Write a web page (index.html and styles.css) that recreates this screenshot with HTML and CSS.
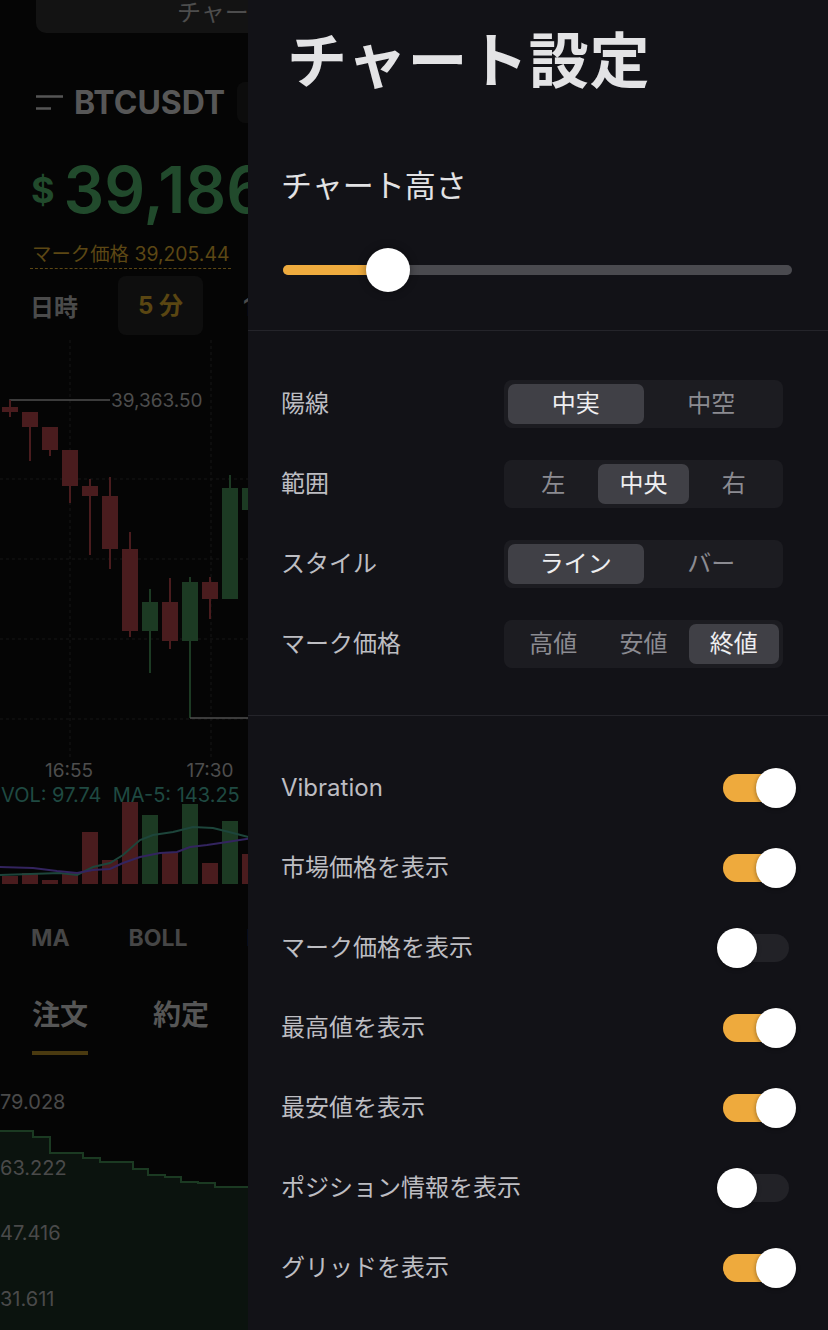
FILE: index.html
```html
<!DOCTYPE html>
<html lang="ja">

<head>
    <meta charset="UTF-8">
    <meta name="viewport" content="width=device-width, initial-scale=1.0">
    <title>チャート設定</title>
    <link rel="stylesheet" href="styles.css">
</head>

<body>
    <div class="screen">
        <!-- market page, dimmed behind the drawer -->
        <div class="market">
            <div class="view-tabs">
                <span class="view-tab">チャート</span>
                <span class="view-tab">詳細</span>
            </div>

            <div class="symbol-row">
                <svg class="menu-icon" width="28" height="15" viewBox="0 0 28 15">
                    <path d="M0 1.5h27M0 13.5h15" stroke="#555" stroke-width="2.6" fill="none" />
                </svg>
                <span class="symbol">BTCUSDT</span>
                <span class="symbol-badge"></span>
            </div>

            <div class="price-row">
                <span class="currency">$</span>
                <span class="price">39,186</span>
            </div>

            <div class="mark-price">マーク価格 39,205.44</div>

            <div class="intervals">
                <span class="interval">日時</span>
                <span class="interval active">5 分</span>
                <span class="interval">15分</span>
            </div>

            <svg class="kline" width="828" height="560" viewBox="0 0 828 560">
                <g stroke="#161616" stroke-dasharray="3 3">
                    <path d="M70 0V420M211 0V420" />
                    <path d="M0 139H828M0 219H828M0 299H828M0 379H828" />
                </g>
                <path d="M10 67V60H110" stroke="#4f4f4f" stroke-width="1.5" fill="none" />
                <text class="axis-label" x="111" y="67">39,363.50</text>

                <g stroke="#4a1c1e" stroke-width="2" fill="#4a1c1e">
                    <path d="M10 60V77M30 72V121M50 87V116M70 110V163M90 139V215M110 137V229M130 192V297M170 238V309M210 237V279" />
                    <rect x="2" y="67" width="16" height="5" stroke="none" />
                    <rect x="22" y="72" width="16" height="15" stroke="none" />
                    <rect x="42" y="87" width="16" height="23" stroke="none" />
                    <rect x="62" y="110" width="16" height="36" stroke="none" />
                    <rect x="82" y="146" width="16" height="10" stroke="none" />
                    <rect x="102" y="156" width="16" height="53" stroke="none" />
                    <rect x="122" y="209" width="16" height="82" stroke="none" />
                    <rect x="162" y="262" width="16" height="39" stroke="none" />
                    <rect x="202" y="242" width="16" height="17" stroke="none" />
                </g>
                <g stroke="#1c3a23" stroke-width="2" fill="#1c3a23">
                    <path d="M150 249V333M190 237V378M230 135V148M250 140V175" />
                    <rect x="142" y="262" width="16" height="29" stroke="none" />
                    <rect x="182" y="242" width="16" height="59" stroke="none" />
                    <rect x="222" y="148" width="16" height="111" stroke="none" />
                    <rect x="242" y="148" width="16" height="22" stroke="none" />
                </g>
                <path d="M190 378H300" stroke="#4f4f4f" stroke-width="1.5" fill="none" />

                <text class="axis-label" x="69" y="437" text-anchor="middle">16:55</text>
                <text class="axis-label" x="210" y="437" text-anchor="middle">17:30</text>
                <text class="vol-label" x="1" y="462">VOL: 97.74&#160;&#160;MA-5: 143.25</text>

                <g fill="#4a1c1e">
                    <rect x="2" y="536" width="16" height="8" />
                    <rect x="22" y="533" width="16" height="11" />
                    <rect x="42" y="540" width="16" height="4" />
                    <rect x="62" y="533" width="16" height="11" />
                    <rect x="82" y="492" width="16" height="52" />
                    <rect x="102" y="520" width="16" height="24" />
                    <rect x="122" y="462" width="16" height="82" />
                    <rect x="162" y="513" width="16" height="31" />
                    <rect x="202" y="523" width="16" height="21" />
                    <rect x="242" y="514" width="16" height="30" />
                </g>
                <g fill="#1c3a23">
                    <rect x="142" y="475" width="16" height="69" />
                    <rect x="182" y="464" width="16" height="80" />
                    <rect x="222" y="481" width="16" height="63" />
                </g>
                <polyline points="0,535 60,533 77,535 93,527 110,523 123,515 140,500 153,495 173,492 193,487 213,488 233,493 260,500" stroke="#1d453b" stroke-width="2" fill="none" />
                <polyline points="0,527 33,528 57,531 77,533 93,530 110,529 123,523 140,517 160,513 177,512 190,507 207,505 227,502 260,497" stroke="#33245f" stroke-width="2" fill="none" />
            </svg>

            <div class="indicators">
                <span>MA</span>
                <span>BOLL</span>
                <span>E</span>
            </div>

            <div class="order-tabs">
                <span class="order-tab active">注文</span>
                <span class="order-tab">約定</span>
            </div>

            <svg class="depth" width="828" height="260" viewBox="0 0 828 260">
                <path d="M0 61H33V67H50V83H83V88H100V92H133V99H148V105H165V107H181V112H198V113H215V117H300V260H0Z" fill="#0b130e" />
                <path d="M0 61H33V67H50V83H83V88H100V92H133V99H148V105H165V107H181V112H198V113H215V117H300" stroke="#1b3a22" stroke-width="2" fill="none" />
                <text class="depth-label" x="0" y="39">79.028</text>
                <text class="depth-label" x="0" y="105">63.222</text>
                <text class="depth-label" x="0" y="170">47.416</text>
                <text class="depth-label" x="0" y="236">31.611</text>
            </svg>
        </div>

        <!-- settings drawer -->
        <aside class="drawer">
            <h1 class="drawer-title">チャート設定</h1>

            <section class="height-setting">
                <div class="setting-title">チャート高さ</div>
                <div class="slider">
                    <div class="slider-track">
                        <div class="slider-fill" style="width: 20.6%"></div>
                    </div>
                    <div class="slider-thumb" style="left: 20.6%"></div>
                </div>
            </section>

            <section class="setting-group">
                <div class="setting-row">
                    <span class="setting-label">陽線</span>
                    <div class="segmented">
                        <span class="segment active">中実</span>
                        <span class="segment">中空</span>
                    </div>
                </div>
                <div class="setting-row">
                    <span class="setting-label">範囲</span>
                    <div class="segmented">
                        <span class="segment">左</span>
                        <span class="segment active">中央</span>
                        <span class="segment">右</span>
                    </div>
                </div>
                <div class="setting-row">
                    <span class="setting-label">スタイル</span>
                    <div class="segmented">
                        <span class="segment active">ライン</span>
                        <span class="segment">バー</span>
                    </div>
                </div>
                <div class="setting-row">
                    <span class="setting-label">マーク価格</span>
                    <div class="segmented">
                        <span class="segment">高値</span>
                        <span class="segment">安値</span>
                        <span class="segment active">終値</span>
                    </div>
                </div>
            </section>

            <section class="setting-group toggles">
                <div class="setting-row">
                    <span class="setting-label">Vibration</span>
                    <span class="switch on"></span>
                </div>
                <div class="setting-row">
                    <span class="setting-label">市場価格を表示</span>
                    <span class="switch on"></span>
                </div>
                <div class="setting-row">
                    <span class="setting-label">マーク価格を表示</span>
                    <span class="switch"></span>
                </div>
                <div class="setting-row">
                    <span class="setting-label">最高値を表示</span>
                    <span class="switch on"></span>
                </div>
                <div class="setting-row">
                    <span class="setting-label">最安値を表示</span>
                    <span class="switch on"></span>
                </div>
                <div class="setting-row">
                    <span class="setting-label">ポジション情報を表示</span>
                    <span class="switch"></span>
                </div>
                <div class="setting-row">
                    <span class="setting-label">グリッドを表示</span>
                    <span class="switch on"></span>
                </div>
            </section>
        </aside>
    </div>
</body>

</html>
```

FILE: styles.css
```css
* {
    box-sizing: border-box;
}

body {
    margin: 0;
    background-color: #050505;
    font-family: "Inter", "Noto Sans CJK JP", sans-serif;
}

.screen {
    position: relative;
    width: 828px;
    height: 1330px;
    overflow: hidden;
}

/* dimmed market page */

.market {
    width: 828px;
}

.view-tabs {
    display: flex;
    height: 33px;
    margin: 0 36px;
    background-color: #131313;
    border-radius: 0 0 10px 10px;
}

.view-tab {
    flex: 1;
    padding-top: 1px;
    text-align: center;
    font-size: 24px;
    line-height: 24px;
    color: #4d4d4d;
}

.symbol-row {
    display: flex;
    align-items: center;
    height: 40px;
    margin-top: 49px;
    padding-left: 36px;
}

.menu-icon {
    margin-right: 10px;
}

.symbol {
    font-size: 32px;
    font-weight: 700;
    color: #575757;
}

.symbol-badge {
    width: 60px;
    height: 41px;
    margin-left: 12px;
    background-color: #0c0c0c;
    border-radius: 8px;
}

.price-row {
    display: flex;
    align-items: center;
    height: 60px;
    margin-top: 38px;
    padding-left: 31px;
    gap: 9px;
    color: #214a2c;
}

.currency {
    font-size: 36px;
    font-weight: 700;
    line-height: 36px;
}

.price {
    font-size: 64px;
    font-weight: 600;
    line-height: 64px;
}

.mark-price {
    width: fit-content;
    margin: 20px 0 0 30px;
    padding: 0 2px;
    font-size: 19.4px;
    line-height: 28px;
    color: #5c4714;
    border-bottom: 1px dashed #5c4714;
}

.intervals {
    display: flex;
    align-items: center;
    height: 59px;
    margin-top: 7px;
    padding-left: 30px;
    gap: 40px;
}

.interval {
    font-size: 24px;
    font-weight: 700;
    color: #4b4b4b;
}

.interval.active {
    height: 59px;
    padding: 0 20px;
    line-height: 59px;
    color: #5a4612;
    background-color: #0e0e0e;
    border-radius: 8px;
}

.kline,
.depth {
    display: block;
}

.kline {
    margin-top: 5px;
}

.axis-label {
    font-family: "Inter", sans-serif;
    font-size: 19px;
    fill: #4d4d4d;
}

.vol-label {
    font-family: "Inter", sans-serif;
    font-size: 20px;
    fill: #1f4a42;
}

.indicators {
    display: flex;
    gap: 59px;
    height: 36px;
    margin-top: 20px;
    padding-left: 31px;
    font-size: 23px;
    font-weight: 700;
    line-height: 36px;
    color: #464646;
}

.order-tabs {
    display: flex;
    gap: 65px;
    margin-top: 39px;
    padding-left: 32px;
}

.order-tab {
    padding-bottom: 16px;
    font-size: 28px;
    font-weight: 700;
    line-height: 40px;
    color: #565656;
    border-bottom: 4px solid transparent;
}

.order-tab.active {
    border-bottom-color: #4a3a10;
}

.depth {
    margin-top: 15px;
}

.depth-label {
    font-family: "Inter", sans-serif;
    font-size: 20px;
    fill: #4a4a4a;
}

/* settings drawer */

.drawer {
    position: absolute;
    top: 0;
    right: 0;
    width: 580px;
    height: 1330px;
    background-color: #121217;
    color: #bdbdc2;
}

.drawer-title {
    margin: 0;
    padding: 31px 33px 0 39px;
    font-size: 60px;
    font-weight: 700;
    line-height: 60px;
    letter-spacing: 0.6px;
    color: #e3e3e5;
}

.height-setting {
    padding: 79px 36px 38px 33px;
}

.setting-title {
    font-size: 31px;
    line-height: 31px;
    color: #e2e2e4;
}

.slider {
    position: relative;
    display: flex;
    align-items: center;
    height: 44px;
    margin: 47px 0 0 2px;
}

.slider-track {
    flex: 1;
    height: 10px;
    background-color: #4a4a4f;
    border-radius: 5px;
    overflow: hidden;
}

.slider-fill {
    height: 100%;
    background-color: #eeab3e;
}

.slider-thumb {
    position: absolute;
    top: 0;
    width: 44px;
    height: 44px;
    background-color: #fff;
    border-radius: 50%;
    transform: translateX(-50%);
    box-shadow: 0 0 8px rgba(0, 0, 0, 0.4);
}

.setting-group {
    padding: 33px 45px 31px 33px;
    border-top: 1px solid #24242a;
}

.setting-row {
    display: flex;
    align-items: center;
    justify-content: space-between;
    height: 80px;
}

.setting-label {
    font-size: 24px;
    line-height: 24px;
}

.segmented {
    display: flex;
    width: 279px;
    height: 48px;
    padding: 4px;
    background-color: #1c1c21;
    border-radius: 8px;
}

.segment {
    flex: 1;
    font-size: 24px;
    line-height: 40px;
    text-align: center;
    color: #8b8b91;
    border-radius: 7px;
}

.segment.active {
    background-color: #404046;
    color: #eeeef0;
}

.toggles {
    padding: 32px 39px 0 33px;
}

.switch {
    position: relative;
    width: 66px;
    height: 28px;
    background-color: #222227;
    border-radius: 14px;
}

.switch::after {
    content: '';
    position: absolute;
    top: -6px;
    left: -6px;
    width: 40px;
    height: 40px;
    background-color: #fff;
    border-radius: 50%;
    box-shadow: 0 1px 4px rgba(0, 0, 0, 0.4);
}

.switch.on {
    background-color: #eeaa3d;
}

.switch.on::after {
    left: 33px;
}
```
